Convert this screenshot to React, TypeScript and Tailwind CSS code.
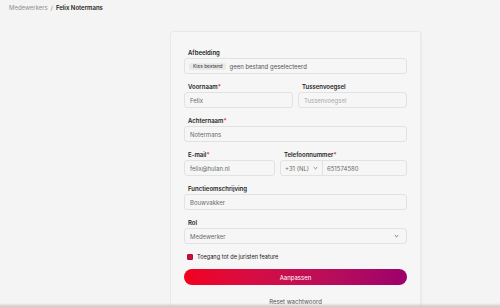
import React from "react";

const font = { fontFamily: "Inter, 'Noto Sans', sans-serif" };

function Label({ children, req }: { children: React.ReactNode; req?: boolean }) {
  return (
    <div className="h-[9px] mb-[1px] pl-[4px] text-[6px] leading-[9px] font-semibold text-[#1f1f1f]">
      {children}
      {req && <span className="text-[#e3002b]">*</span>}
    </div>
  );
}

function Input({ value, placeholder }: { value?: string; placeholder?: string }) {
  return (
    <div className="h-[16px] rounded-[3px] border border-[#e2e2e2] bg-[#f6f6f6] flex items-center px-[5px] text-[6px]">
      {value ? (
        <span className="text-[#6b6b6b]">{value}</span>
      ) : (
        <span className="text-[#a8a8a8]">{placeholder}</span>
      )}
    </div>
  );
}

export default function App() {
  return (
    <div className="relative w-[500px] h-[307px] overflow-hidden bg-[#f3f4f3]" style={font}>
      <div className="pt-[3px] pl-[9px] h-[31px] text-[6px] leading-[9px] flex gap-[3px]">
        <span className="text-[#8f8f8f]">Medewerkers</span>
        <span className="text-[#8f8f8f]">/</span>
        <span className="font-semibold text-[#1f1f1f]">Felix Notermans</span>
      </div>
      <div className="ml-[170px] w-[251px] h-[300px] rounded-t-[3px] border border-[#e8e9e8] bg-[#f5f6f5] shadow-[1px_0_2px_rgba(0,0,0,0.04)] pt-[16px] px-[13px] flex flex-col">
        <div className="flex flex-col gap-[8px]">
          <div>
            <Label>Afbeelding</Label>
            <div className="h-[16px] rounded-[3px] border border-[#e2e2e2] bg-[#f6f6f6] flex items-center pl-[4px] gap-[3px]">
              <span className="rounded-[2px] bg-[#e9e9e9] px-[4px] h-[7px] leading-[7px] text-[4.8px] text-[#333]">Kies bestand</span>
              <span className="text-[6px] text-[#555]">geen bestand geselecteerd</span>
            </div>
          </div>
          <div className="grid grid-cols-2 gap-[5px]">
            <div>
              <Label req>Voornaam</Label>
              <Input value="Felix" />
            </div>
            <div>
              <Label>Tussenvoegsel</Label>
              <Input placeholder="Tussenvoegsel" />
            </div>
          </div>
          <div>
            <Label req>Achternaam</Label>
            <Input value="Notermans" />
          </div>
          <div className="grid grid-cols-[91px_1fr] gap-[5px]">
            <div>
              <Label req>E-mail</Label>
              <Input value="felix@hulan.nl" />
            </div>
            <div>
              <Label req>Telefoonnummer</Label>
              <div className="h-[16px] rounded-[3px] border border-[#e2e2e2] bg-[#f6f6f6] flex items-center text-[6px] text-[#6b6b6b]">
                <div className="w-[42px] h-full border-r border-[#e2e2e2] flex items-center pl-[4px] gap-[4px]">
                  <span>+31 (NL)</span>
                  <svg width="5" height="4" viewBox="0 0 5 4"><path d="M0.8 1.2 L2.5 2.8 L4.2 1.2" stroke="#666" strokeWidth="0.8" fill="none" /></svg>
                </div>
                <span className="pl-[4px]">651574580</span>
              </div>
            </div>
          </div>
          <div>
            <Label>Functieomschrijving</Label>
            <Input value="Bouwvakker" />
          </div>
          <div>
            <Label>Rol</Label>
            <div className="h-[16px] rounded-[3px] border border-[#e2e2e2] bg-[#f6f6f6] flex items-center justify-between pl-[5px] pr-[7px] text-[6px] text-[#6b6b6b]">
              <span>Medewerker</span>
              <svg width="5" height="4" viewBox="0 0 5 4"><path d="M0.8 1.2 L2.5 2.8 L4.2 1.2" stroke="#666" strokeWidth="0.9" fill="none" /></svg>
            </div>
          </div>
        </div>
        <div className="mt-[9px] flex items-center gap-[4px] pl-[3px]">
          <span className="w-[6px] h-[6px] rounded-[1px] bg-[#c8103a] border border-[#b00d30]" />
          <span className="text-[5.6px] text-[#222]">Toegang tot de juristen feature</span>
        </div>
        <div className="mt-[8px] h-[16px] rounded-full bg-gradient-to-r from-[#f2001c] to-[#9c006b] flex items-center justify-center text-[6px] text-white">
          Aanpassen
        </div>
        <div className="mt-[12px] text-center text-[6px] text-[#555]">Reset wachtwoord</div>
      </div>
      <div className="absolute left-0 right-0 bottom-0 h-[4px] bg-gradient-to-b from-transparent to-[#c9cac9]" />
    </div>
  );
}
